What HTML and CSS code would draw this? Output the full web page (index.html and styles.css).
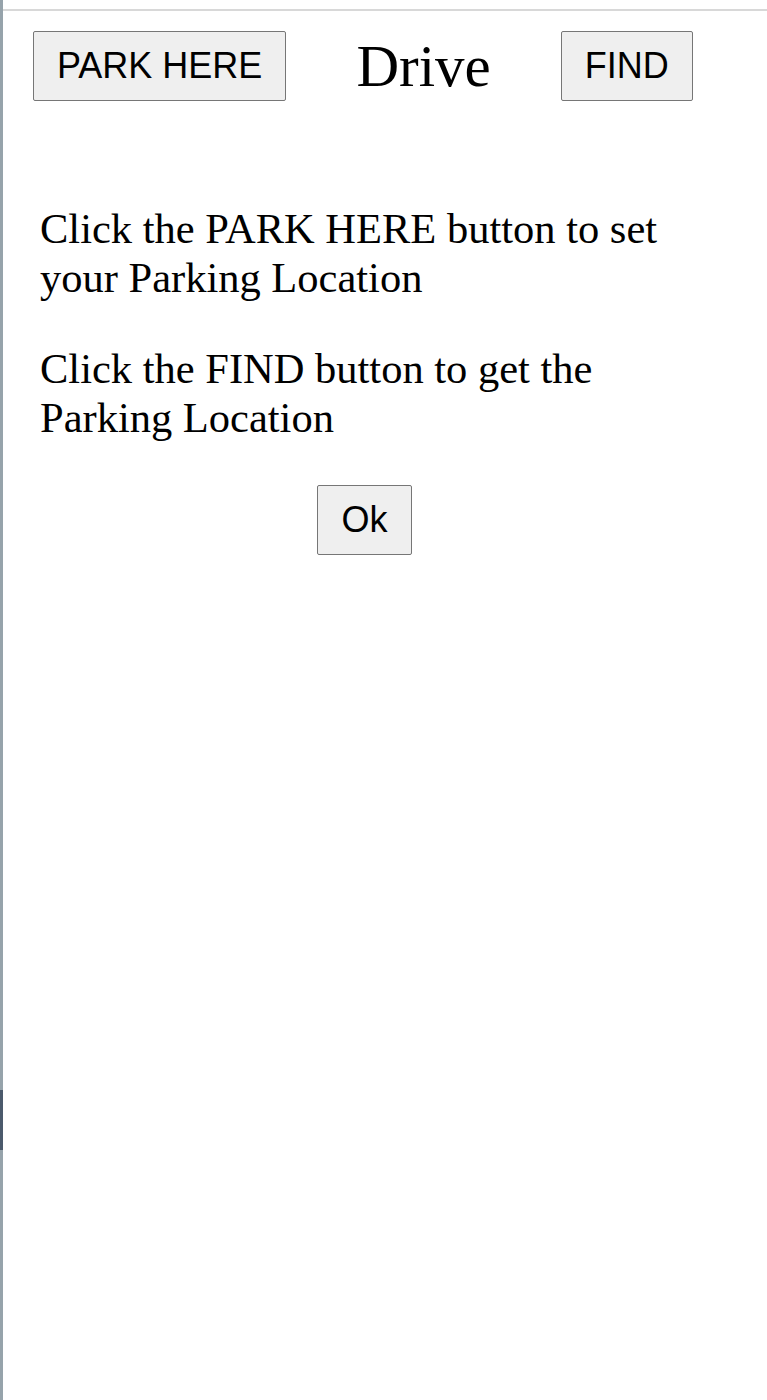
FILE: index.html
```html
<!DOCTYPE html>
<html lang="en">
<head>
<meta charset="utf-8">
<title>Drive</title>
<link rel="stylesheet" href="styles.css">
</head>
<body>
<div class="edge"><div class="edge-dark"></div></div>
<div class="page">
  <div class="topline"></div>
  <div class="wrap">
    <header class="bar">
      <button class="btn" type="button">PARK HERE</button>
      <span class="title">Drive</span>
      <button class="btn" type="button">FIND</button>
    </header>
    <section class="info">
      <p>Click the PARK HERE button to set your Parking Location</p>
      <p>Click the FIND button to get the Parking Location</p>
      <div class="ok-row"><button class="btn" type="button">Ok</button></div>
    </section>
  </div>
</div>
</body>
</html>
```

FILE: styles.css
```css
html, body {
  margin: 0;
  padding: 0;
  background: #ffffff;
}
body {
  display: flex;
  min-height: 1400px;
  font-family: "Liberation Serif", "Times New Roman", serif;
  color: #000;
}
.edge {
  width: 3px;
  flex: none;
  background: #96a3ab;
  display: flex;
  flex-direction: column;
}
.edge-dark {
  margin-top: 1090px;
  height: 60px;
  background: #4b5a6c;
}
.page {
  flex: 1;
}
.topline {
  margin-top: 9px;
  height: 2px;
  background: #d8d8d8;
}
.wrap {
  width: 723px;
}
.bar {
  display: flex;
  align-items: center;
  gap: 70px;
  padding: 20px 0 0 30px;
  margin-bottom: 103px;
}
.btn {
  font-family: "Liberation Sans", Arial, sans-serif;
  font-size: 36px;
  line-height: 40px;
  padding: 14px 23px;
  background: #efefef;
  color: #000;
  border: 1px solid #767676;
  border-radius: 2px;
  margin: 0;
}
.title {
  font-size: 59px;
  line-height: 68px;
}
.info {
  padding: 0 37px;
}
.info p {
  font-size: 42.5px;
  line-height: 49px;
  margin: 42px 0 42px;
}
.ok-row {
  text-align: center;
  padding-top: 1px;
}
```
